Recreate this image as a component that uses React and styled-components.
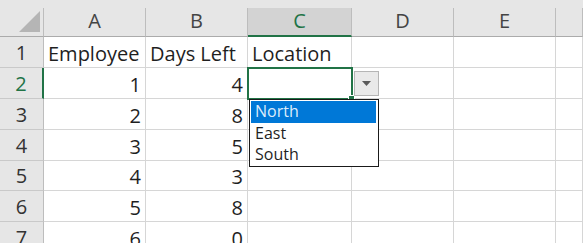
import { Fragment } from 'react'
import styled, { createGlobalStyle } from 'styled-components'

const GlobalStyle = createGlobalStyle`
  html, body {
    margin: 0;
    padding: 0;
    background: #ffffff;
  }
  body {
    font-family: 'Open Sans', 'Noto Sans', sans-serif;
    overflow: hidden;
  }
`

const columns = ['A', 'B', 'C', 'D', 'E', '']
const rows = [
  ['Employee', 'Days Left', 'Location'],
  [1, 4, ''],
  [2, 8, ''],
  [3, 5, ''],
  [4, 3, ''],
  [5, 8, ''],
  [6, 0, ''],
]

const Wrapper = styled.div`
  position: relative;
  width: 583px;
  height: 243px;
  overflow: hidden;
`

const Sheet = styled.div`
  display: grid;
  grid-template-columns: 44px 102px 102px 104px 102px 102px 27px;
  grid-template-rows: 8px 29px 31px 31px 31px 31px 30px 31px 31px;
  color: #1f1f1f;
`

const TopStrip = styled.div`
  grid-column: 1 / -1;
  background: #e6e6e6;
`

const Corner = styled.div`
  background: #e6e6e6;
  border-right: 1px solid #bdbdbd;
  border-bottom: 1px solid #ababab;
  display: flex;
  align-items: flex-end;
  justify-content: flex-end;
  padding: 0 3px 4px 0;
`

const ColHeader = styled.div`
  background: ${(p) => (p.$active ? '#d3d3d3' : '#e6e6e6')};
  color: ${(p) => (p.$active ? '#217346' : '#444444')};
  border-right: 1px solid #bdbdbd;
  border-bottom: ${(p) => (p.$active ? '2px solid #217346' : '1px solid #ababab')};
  font-size: 20px;
  line-height: 1;
  display: flex;
  align-items: center;
  justify-content: center;
  padding-bottom: ${(p) => (p.$active ? '1px' : '2px')};
  box-sizing: border-box;
`

const RowHeader = styled.div`
  background: #e6e6e6;
  color: ${(p) => (p.$active ? '#217346' : '#333333')};
  border-right: ${(p) => (p.$active ? '2px solid #217346' : '1px solid #bdbdbd')};
  border-bottom: 1px solid #c9c9c9;
  font-size: 20px;
  line-height: 1;
  display: flex;
  align-items: flex-end;
  justify-content: center;
  padding-bottom: 4px;
  box-sizing: border-box;
`

const Cell = styled.div`
  border-right: 1px solid #d6d6d6;
  border-bottom: 1px solid #d6d6d6;
  font-size: 20px;
  line-height: 1;
  display: flex;
  align-items: flex-end;
  justify-content: ${(p) => (p.$number ? 'flex-end' : 'flex-start')};
  padding: 0 4px 3px 4px;
  box-sizing: border-box;
  white-space: nowrap;
`

const Selection = styled.div`
  position: absolute;
  left: 247px;
  top: 67px;
  width: 106px;
  height: 33px;
  border: 2px solid #217346;
  box-sizing: border-box;
  pointer-events: none;
`

const Handle = styled.div`
  position: absolute;
  right: -4px;
  bottom: -4px;
  width: 5px;
  height: 5px;
  background: #217346;
  border: 1px solid #ffffff;
`

const DropButton = styled.div`
  position: absolute;
  left: 354px;
  top: 71px;
  width: 25px;
  height: 25px;
  box-sizing: border-box;
  background: #e9e9e9;
  border: 1px solid #b5b5b5;
  display: flex;
  align-items: center;
  justify-content: center;
`

const List = styled.div`
  position: absolute;
  left: 249px;
  top: 99px;
  width: 130px;
  height: 68px;
  box-sizing: border-box;
  background: #ffffff;
  border: 1px solid #1a1a1a;
  padding: 1px 2px 0 1px;
  display: flex;
  flex-direction: column;
`

const Option = styled.div`
  height: 21.5px;
  line-height: 21px;
  font-size: 16px;
  padding-left: 4px;
  background: ${(p) => (p.$selected ? '#0078d7' : 'transparent')};
  color: ${(p) => (p.$selected ? '#dcecfb' : '#1f1f1f')};
`

const App = () => {
  return (
    <Wrapper>
      <GlobalStyle />
      <Sheet>
        <TopStrip />
        <Corner>
          <svg width="21" height="21" viewBox="0 0 21 21">
            <polygon points="0,21 21,21 21,0" fill="#b5b5b5" />
          </svg>
        </Corner>
        {columns.map((c, i) => (
          <ColHeader key={i} $active={c === 'C'}>
            {c}
          </ColHeader>
        ))}
        {rows.map((row, r) => (
          <Fragment key={r}>
            <RowHeader $active={r === 1}>{r + 1}</RowHeader>
            {columns.map((c, i) => (
              <Cell key={i} $number={typeof row[i] === 'number'}>
                {row[i] ?? ''}
              </Cell>
            ))}
          </Fragment>
        ))}
      </Sheet>
      <Selection>
        <Handle />
      </Selection>
      <DropButton>
        <svg width="9" height="5" viewBox="0 0 9 5">
          <polygon points="0,0 9,0 4.5,5" fill="#5a5a5a" />
        </svg>
      </DropButton>
      <List>
        <Option $selected>North</Option>
        <Option>East</Option>
        <Option>South</Option>
      </List>
    </Wrapper>
  )
}

export default App
